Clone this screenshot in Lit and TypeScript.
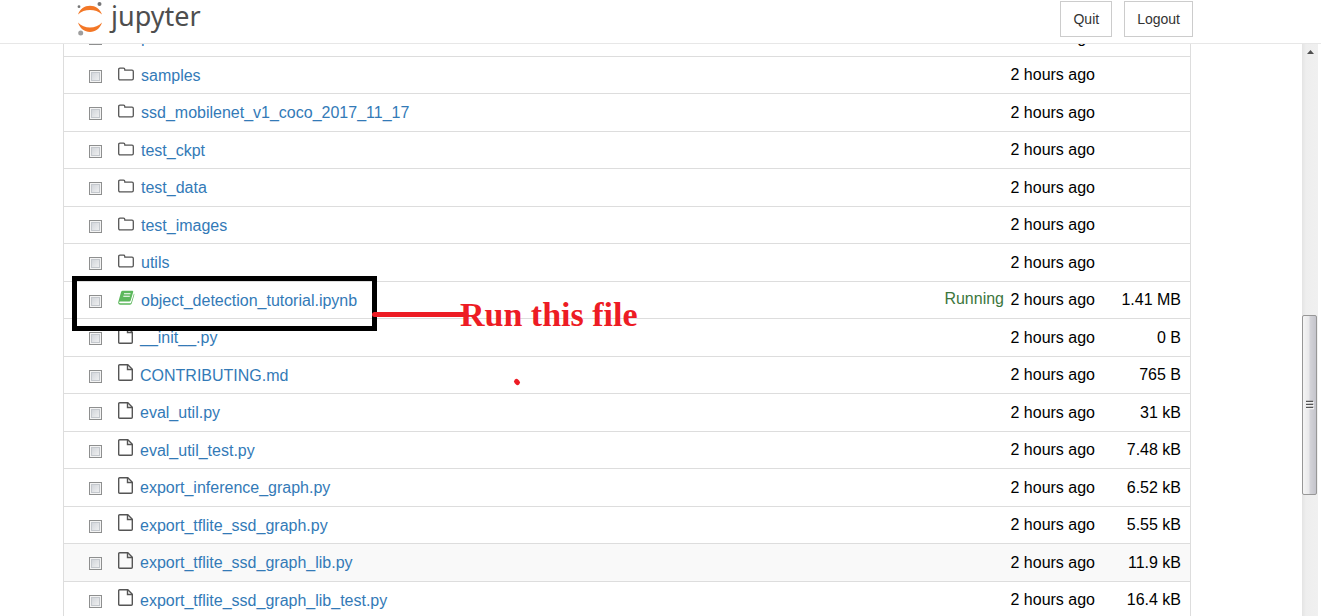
import { LitElement, html, css, svg } from "lit";
import { customElement } from "lit/decorators.js";
import { classMap } from "lit/directives/class-map.js";

type Kind = "folder" | "notebook" | "file";
interface Entry {
  name: string;
  kind: Kind;
  size?: string;
  running?: boolean;
  hover?: boolean;
}

const entries: Entry[] = [
  { name: "protos", kind: "folder" },
  { name: "samples", kind: "folder" },
  { name: "ssd_mobilenet_v1_coco_2017_11_17", kind: "folder" },
  { name: "test_ckpt", kind: "folder" },
  { name: "test_data", kind: "folder" },
  { name: "test_images", kind: "folder" },
  { name: "utils", kind: "folder" },
  { name: "object_detection_tutorial.ipynb", kind: "notebook", size: "1.41 MB", running: true },
  { name: "__init__.py", kind: "file", size: "0 B" },
  { name: "CONTRIBUTING.md", kind: "file", size: "765 B" },
  { name: "eval_util.py", kind: "file", size: "31 kB" },
  { name: "eval_util_test.py", kind: "file", size: "7.48 kB" },
  { name: "export_inference_graph.py", kind: "file", size: "6.52 kB" },
  { name: "export_tflite_ssd_graph.py", kind: "file", size: "5.55 kB" },
  { name: "export_tflite_ssd_graph_lib.py", kind: "file", size: "11.9 kB", hover: true },
  { name: "export_tflite_ssd_graph_lib_test.py", kind: "file", size: "16.4 kB" },
];

const shapes = {
  folder: svg`<path d="M.7 3.5q0-1.300 1.300-1.300h3.500q1.300 0 1.300 1.300v.7h7.200q1.300 0 1.300 1.300v7q0 1.300-1.300 1.300H2q-1.300 0-1.300-1.300z" fill="none" stroke="#555" stroke-width="1.300"/>`,
  notebook: svg`
    <path d="M4.800.8h9.400q1.300 0 1 1.200l-2.500 8.500q-.3 1-1.300 1H2.300q-1.500 0-1.200 1.100.2.700 1.200.7h9.700q.9 0 1.200-.9L16 3.500q.5.600.3 1.300l-2.500 8.500q-.4 1.400-1.800 1.400H2.200Q.5 14.700.2 13q-.1-.8.2-1.600L3 2.200Q3.400.8 4.800.8z" fill="#5cb85c"/>
    <path d="M6 3.800h6.500M5.300 6.300h6.500" stroke="#fff" stroke-width="1.100"/>`,
  file: svg`
    <path d="M1.700.7h8.100l4.500 4.500v10.100q0 1-1 1H1.700q-1 0-1-1V1.700q0-1 1-1z" fill="none" stroke="#555" stroke-width="1.400"/>
    <path d="M9.500.7v4.800h4.800" fill="none" stroke="#555" stroke-width="1.400"/>`,
};

@customElement("app-root")
export class AppRoot extends LitElement {
  static styles = css`
    :host {
      display: flex;
      flex-direction: column;
      height: 100vh;
      overflow: hidden;
      position: relative;
      background: #fff;
      color: #000;
      font: 16px/20px "Liberation Sans", Arial, sans-serif;
    }
    .header {
      flex: none;
      box-sizing: border-box;
      height: 44px;
      padding: 1px 128px 0 77px;
      display: flex;
      justify-content: space-between;
      align-items: flex-start;
      border-bottom: 1px solid #e7e7e7;
    }
    .logo {
      display: flex;
      gap: 7px;
      color: #4e4e4e;
      text-decoration: none;
      font: 27px/30px "Noto Sans", "Open Sans", sans-serif;
    }
    .planet { width: 27px; height: 35px; }
    .actions { display: flex; gap: 12px; }
    .actions button {
      height: 36px;
      padding: 0 12px;
      border: 1px solid #ccc;
      border-radius: 0;
      background: #fff;
      color: #333;
      font: 14px/20px "Liberation Sans", Arial, sans-serif;
    }
    .body {
      flex: 1;
      min-height: 0;
      display: flex;
      margin-right: 3px;
      overflow: hidden;
    }
    .files { flex: 1; padding: 0 111px 0 63px; margin-top: -25px; }
    table {
      width: 100%;
      border-spacing: 0;
      border: solid #ddd;
      border-width: 0 1px;
    }
    tr { height: 38px; }
    tr:nth-child(even) { height: 37px; }
    tr.hover { background: #f9f9f9; }
    td { padding: 0; border-bottom: 1px solid #ddd; vertical-align: middle; white-space: nowrap; }
    .name { display: flex; align-items: center; }
    .pick { width: 54px; padding-left: 25px; box-sizing: border-box; }
    .pick input {
      appearance: none;
      display: block;
      box-sizing: border-box;
      width: 13px;
      height: 13px;
      margin: 2px 0 0;
      border: 1px solid #8e8f8f;
      background: linear-gradient(135deg, #cbcfd5, #f6f6f6);
      box-shadow: inset 0 0 0 1px #f4f4f4, inset 0 0 0 2px #c4c8cd;
    }
    .icon { width: 17px; height: 17px; margin-right: 6px; }
    .icon.folder { margin-bottom: 2px; }
    .icon.file { margin: 0 5px 5px 0; }
    .icon.notebook { margin-bottom: 4px; }
    a { color: #337ab7; text-decoration: none; }
    .link { padding-top: 1px; }
    .state { color: #3c763d; text-align: right; padding-bottom: 2px; }
    .time { width: 91px; text-align: right; }
    .size { width: 95px; padding-right: 9px; box-sizing: border-box; text-align: right; }
    .track {
      flex: none;
      width: 16px;
      box-sizing: border-box;
      background: linear-gradient(90deg, #e4e4e4, #eee 4px, #f0f0f0);
      display: flex;
      flex-direction: column;
      align-items: flex-start;
    }
    .up { width: 16px; height: 16px; flex: none; }
    .before { flex: 256; }
    .after { flex: 121; }
    .thumb {
      flex: 179;
      width: 15px;
      box-sizing: border-box;
      display: grid;
      place-items: center;
      border: 1px solid #979797;
      border-radius: 2px;
      background: linear-gradient(90deg, #f5f5f5, #e9e9eb 45%, #d3d3d8 55%, #c4c4cb);
    }
    .notes { position: absolute; left: 0; top: 0; width: 700px; height: 400px; pointer-events: none; }
    .notes text { font: bold 34px "Liberation Serif", "Times New Roman", serif; }
  `;

  private row(e: Entry, i: number) {
    return html`<tr class=${classMap({ hover: !!e.hover })}>
      <td class="pick"><input type="checkbox" id="pick-${i}" aria-label=${e.name} /></td>
      <td>
        <div class="name">
          <svg class="icon ${e.kind}" viewBox="0 0 17 17" aria-hidden="true">${shapes[e.kind]}</svg>
          <a class="link" href="#${e.name}">${e.name}</a>
        </div>
      </td>
      <td class="state">${e.running ? "Running" : ""}</td>
      <td class="time">2 hours ago</td>
      <td class="size">${e.size ?? ""}</td>
    </tr>`;
  }

  render() {
    return html`
      <header class="header">
        <a class="logo" href="#tree">
          <svg class="planet" viewBox="0 0 27 35" aria-hidden="true">
            <path d="M1 13.500C3 8 7.500 4.800 13 4.800s10 3.200 12 8.700C21.800 10.300 17.500 9 13 9S4.200 10.300 1 13.500z" fill="#f37726"/>
            <path d="M1 21.500C3 27.500 7.500 31 13 31s10-3.500 12-9.500c-3.200 3.500-7.500 5-12 5s-8.800-1.500-12-5z" fill="#f37726"/>
            <circle cx="22.500" cy="3" r="2" fill="#767677"/>
            <circle cx="2" cy="5.700" r="1.400" fill="#767677"/>
            <circle cx="3.700" cy="32" r="2.500" fill="#9e9e9e"/>
          </svg>
          <span>jupyter</span>
        </a>
        <div class="actions"><button>Quit</button><button>Logout</button></div>
      </header>
      <main class="body">
        <div class="files"><table><tbody>${entries.map((e, i) => this.row(e, i))}</tbody></table></div>
        <div class="track">
          <svg class="up" viewBox="0 0 16 16" aria-hidden="true"><path d="M5 10l3.500-4 3.500 4z" fill="#505050"/></svg>
          <div class="before"></div>
          <div class="thumb">
            <svg width="8" height="10" viewBox="0 0 8 10" aria-hidden="true"><path d="M0 1.500h7M0 4.500h7M0 7.500h7" stroke="#555" stroke-width="1.300"/><path d="M0 2.700h8M0 5.700h8M0 8.700h8" stroke="#fff"/></svg>
          </div>
          <div class="after"></div>
        </div>
      </main>
      <svg class="notes" viewBox="0 0 700 400">
        <rect x="74.500" y="278.500" width="300" height="50" fill="none" stroke="#000" stroke-width="5"/>
        <path d="M374.500 314.500H466" stroke="#ed1c24" stroke-width="5" stroke-linecap="round"/>
        <text x="460" y="326" fill="#ed1c24">Run this file</text>
        <path d="M516.500 381.500l1 1" stroke="#ed1c24" stroke-width="5" stroke-linecap="round"/>
      </svg>
    `;
  }
}
